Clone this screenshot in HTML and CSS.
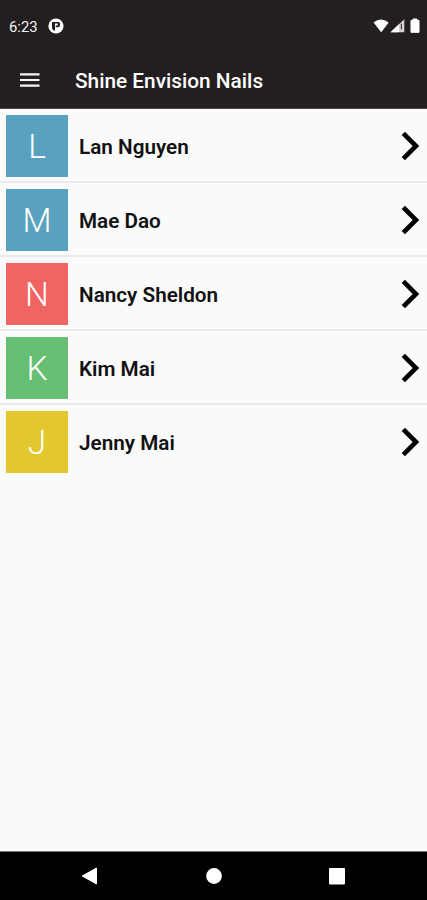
FILE: index.html
```html
<!DOCTYPE html>
<html lang="en">
<head>
<meta charset="utf-8">
<title>Shine Envision Nails</title>
<link rel="stylesheet" href="styles.css">
</head>
<body>
<div class="status">
  <span class="time">6:23</span>
  <svg class="app-dot" width="16" height="16" viewBox="0 0 16 16"><circle cx="8" cy="8" r="7.600" fill="#fff"/><path d="M4 4h7a2 2 0 0 1 1 1.700v1.500a2 2 0 0 1-2 2H7.700V7.500h2V5.600H7V12.400H5.600L4 10.500Z" fill="#231f20"/></svg>
  <svg class="signals" width="48" height="16" viewBox="0 0 48 16"><path d="M.5 4.600Q8 -1.600 15.700 4.600L8.200 14.300Z" fill="#fff"/><path d="M17.500 14.300L31.300 1.200V14.300Z" fill="#d5d4d4"/><path d="M17.500 14.300L26 6.200V14.300Z" fill="#fff"/><path d="M28.400 5.700V11.500" stroke="#454142" stroke-width="1.200"/><path d="M38 2.400h2V1h4v1.400h2V14.300h-8Z" fill="#fff" stroke="#fff" stroke-linejoin="round"/></svg>
</div>
<header class="bar">
  <svg class="menu" width="20" height="16" viewBox="0 0 20 16"><path d="M0 2.300h19.500M0 8h19.500M0 13.700h19.500" stroke="#f5f5f5" stroke-width="2.200"/></svg>
  <h1 class="title">Shine Envision Nails</h1>
</header>
<main class="list">
  <div class="row"><span class="tile blue">L</span><span class="name">Lan Nguyen</span><svg class="chev" width="20" height="32" viewBox="0 0 20 32"><path d="M3.300 3.300L16 16L3.300 28.700" /></svg></div>
  <div class="row"><span class="tile blue">M</span><span class="name">Mae Dao</span><svg class="chev" width="20" height="32" viewBox="0 0 20 32"><path d="M3.300 3.300L16 16L3.300 28.700" /></svg></div>
  <div class="row"><span class="tile red">N</span><span class="name">Nancy Sheldon</span><svg class="chev" width="20" height="32" viewBox="0 0 20 32"><path d="M3.300 3.300L16 16L3.300 28.700" /></svg></div>
  <div class="row"><span class="tile green">K</span><span class="name">Kim Mai</span><svg class="chev" width="20" height="32" viewBox="0 0 20 32"><path d="M3.300 3.300L16 16L3.300 28.700" /></svg></div>
  <div class="row"><span class="tile yellow">J</span><span class="name">Jenny Mai</span><svg class="chev" width="20" height="32" viewBox="0 0 20 32"><path d="M3.300 3.300L16 16L3.300 28.700" /></svg></div>
</main>
<nav class="nav">
  <svg width="18" height="18" viewBox="0 0 18 18"><path d="M1.200 9L15.500 1V17Z" fill="#fff" stroke="#fff" stroke-linejoin="round"/></svg>
  <svg width="18" height="18" viewBox="0 0 18 18"><circle cx="9" cy="9" r="7.900" fill="#fff"/></svg>
  <svg width="18" height="18" viewBox="0 0 18 18"><rect x="1" y="1" width="16" height="16.500" rx="1" fill="#fff"/></svg>
</nav>
</body>
</html>
```
FILE: styles.css
```css
* { box-sizing: border-box; }
body {
  margin: 0;
  height: 900px;
  display: flex;
  flex-direction: column;
  overflow: hidden;
  background: #fafafa;
  font-family: Roboto, sans-serif;
}
.status {
  height: 53px;
  padding: 0 6px 1px 9px;
  display: flex;
  align-items: center;
  background: #231f20;
  color: #f2f2f2;
}
.time { width: 39px; font-size: 14.8px; line-height: 20px; padding-top: 1px; }
.signals { margin-left: auto; }
.bar {
  height: 56px;
  padding: 0 0 1px 20px;
  display: flex;
  align-items: center;
  background: #231f20;
  border-bottom: 1px solid #4a4748;
}
.title {
  margin: 1px 0 0 35px;
  color: #fff;
  font-size: 20.8px;
  line-height: 28px;
  font-weight: 500;
}
.list { flex: 1; }
.row {
  height: 74px;
  padding: 6px 7px 4px 6px;
  display: flex;
  align-items: flex-start;
  border-bottom: 2px solid #ebebeb;
}
.row:last-child { border-bottom: 0; }
.tile {
  width: 62px;
  height: 62px;
  color: #fff;
  font-size: 33.5px;
  line-height: 64px;
  font-weight: 300;
  text-align: center;
}
.blue { background: #58a2bf; }
.red { background: #f06464; }
.green { background: #67bf74; }
.yellow { background: #e2c72e; }
.name {
  flex: 1;
  padding-left: 11px;
  color: #111;
  font-size: 20.7px;
  line-height: 64px;
  font-weight: 600;
}
.chev { margin-top: 15px; fill: none; stroke: #000; stroke-width: 4.6; }
.nav {
  height: 49px;
  padding: 0 81px 1px;
  display: flex;
  align-items: center;
  justify-content: space-between;
  background: #000;
  border-top: 1px solid #777;
}
```
